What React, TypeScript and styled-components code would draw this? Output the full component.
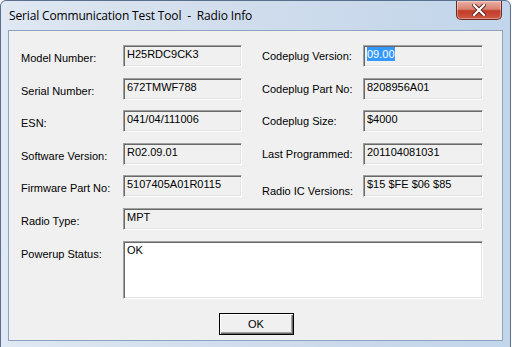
import React from "react";
import styled, { createGlobalStyle } from "styled-components";

const Global = createGlobalStyle`
  html, body { margin: 0; padding: 0; background: #ffffff; overflow: hidden; }
  * { box-sizing: border-box; }
`;

const Window = styled.div`
  width: 511px;
  height: 349px;
  border: 1px solid #5a6f8c;
  border-radius: 6px 6px 0 0;
  background: linear-gradient(90deg, #dfe8f3 0%, #cfdcec 50%, #c2d5ea 100%);
  padding: 0 7px 7px 7px;
  display: flex;
  flex-direction: column;
`;

const TitleBar = styled.div`
  height: 29px;
  display: flex;
  align-items: flex-start;
  justify-content: space-between;
`;

const Title = styled.div`
  font-family: "Open Sans", "Liberation Sans", sans-serif;
  font-size: 12px;
  color: #000;
  padding-top: 6px;
  padding-left: 1px;
  white-space: pre;
  letter-spacing: -0.15px;
`;

const CloseButton = styled.div`
  width: 46px;
  height: 19px;
  margin-right: 1px;
  border: 1px solid #6b2a25;
  border-top: none;
  border-radius: 0 0 5px 5px;
  background: linear-gradient(180deg, #eab0a6 0%, #d98272 45%, #c23a28 55%, #cf5a44 100%);
  box-shadow: inset 0 0 0 1px rgba(255, 255, 255, 0.35);
  display: flex;
  align-items: center;
  justify-content: center;
`;

const Client = styled.div`
  flex: 1;
  background: #f0f0f0;
  border: 1px solid #8ea3c0;
  padding: 14px 0 0 12px;
  display: flex;
  flex-direction: column;
`;

const Grid = styled.div`
  display: grid;
  grid-template-columns: 102px 119px 20px 101px 120px;
  grid-template-rows: repeat(6, 22px) 58px;
  row-gap: 10.6px;
`;

const Label = styled.div<{ $col: number; $off?: number }>`
  grid-column: ${(p) => p.$col};
  font-family: "Liberation Sans", Arial, sans-serif;
  font-size: 11px;
  line-height: 13px;
  color: #000;
  padding-top: ${(p) => p.$off ?? 6}px;
  white-space: nowrap;
`;

const Field = styled.div<{ $col: string; $white?: boolean }>`
  grid-column: ${(p) => p.$col};
  background: ${(p) => (p.$white ? "#ffffff" : "#f0f0f0")};
  border: 1px solid;
  border-color: #a0a0a0 #ffffff #ffffff #a0a0a0;
  box-shadow: inset 1px 1px 0 #696969, inset -1px -1px 0 #e3e3e3;
  font-family: "Liberation Sans", Arial, sans-serif;
  font-size: 11px;
  line-height: 13px;
  color: #000;
  padding: 2px 3px;
  white-space: nowrap;
  overflow: hidden;
`;

const Selected = styled.span`
  background: #3399ff;
  color: #ffffff;
  padding: 1px 0;
`;

const ButtonRow = styled.div`
  display: flex;
  justify-content: center;
  padding-top: 14px;
  padding-right: 11px;
`;

const OkButton = styled.div`
  width: 75px;
  height: 22px;
  border: 1px solid #000;
  background: #f0f0f0;
  box-shadow: inset 1px 1px 0 #ffffff, inset -1px -1px 0 #696969, inset -2px -2px 0 #a0a0a0;
  font-family: "Liberation Sans", Arial, sans-serif;
  font-size: 11px;
  color: #000;
  display: flex;
  align-items: center;
  justify-content: center;
`;

const rows: [string, string, string, React.ReactNode][] = [
  ["Model Number:", "H25RDC9CK3", "Codeplug Version:", <Selected>09.00</Selected>],
  ["Serial Number:", "672TMWF788", "Codeplug Part No:", "8208956A01"],
  ["ESN:", "041/04/111006", "Codeplug Size:", "$4000"],
  ["Software Version:", "R02.09.01", "Last Programmed:", "201104081031"],
  ["Firmware Part No:", "5107405A01R0115", "Radio IC Versions:", "$15 $FE $06 $85"],
];

export default function App() {
  return (
    <>
      <Global />
      <Window>
        <TitleBar>
          <Title>Serial Communication Test Tool  -  Radio Info</Title>
          <CloseButton>
            <svg width="14" height="12" viewBox="0 0 14 12">
              <path
                d="M2 1 L12 11 M12 1 L2 11"
                stroke="#5a1f1a"
                strokeWidth="4"
                strokeLinecap="square"
              />
              <path
                d="M2 1 L12 11 M12 1 L2 11"
                stroke="#ffffff"
                strokeWidth="2.2"
                strokeLinecap="square"
              />
            </svg>
          </CloseButton>
        </TitleBar>
        <Client>
          <Grid>
            {rows.map(([l1, v1, l2, v2], i) => (
              <React.Fragment key={i}>
                <Label $col={1} $off={7}>{l1}</Label>
                <Field $col="2">{v1}</Field>
                <Label $col={4} $off={i === 4 ? 10 : 5}>{l2}</Label>
                <Field $col="5">{v2}</Field>
              </React.Fragment>
            ))}
            <Label $col={1} $off={7}>Radio Type:</Label>
            <Field $col="2 / 6">MPT</Field>
            <Label $col={1} $off={7}>Powerup Status:</Label>
            <Field $col="2 / 6" $white>OK</Field>
          </Grid>
          <ButtonRow>
            <OkButton>OK</OkButton>
          </ButtonRow>
        </Client>
      </Window>
    </>
  );
}
